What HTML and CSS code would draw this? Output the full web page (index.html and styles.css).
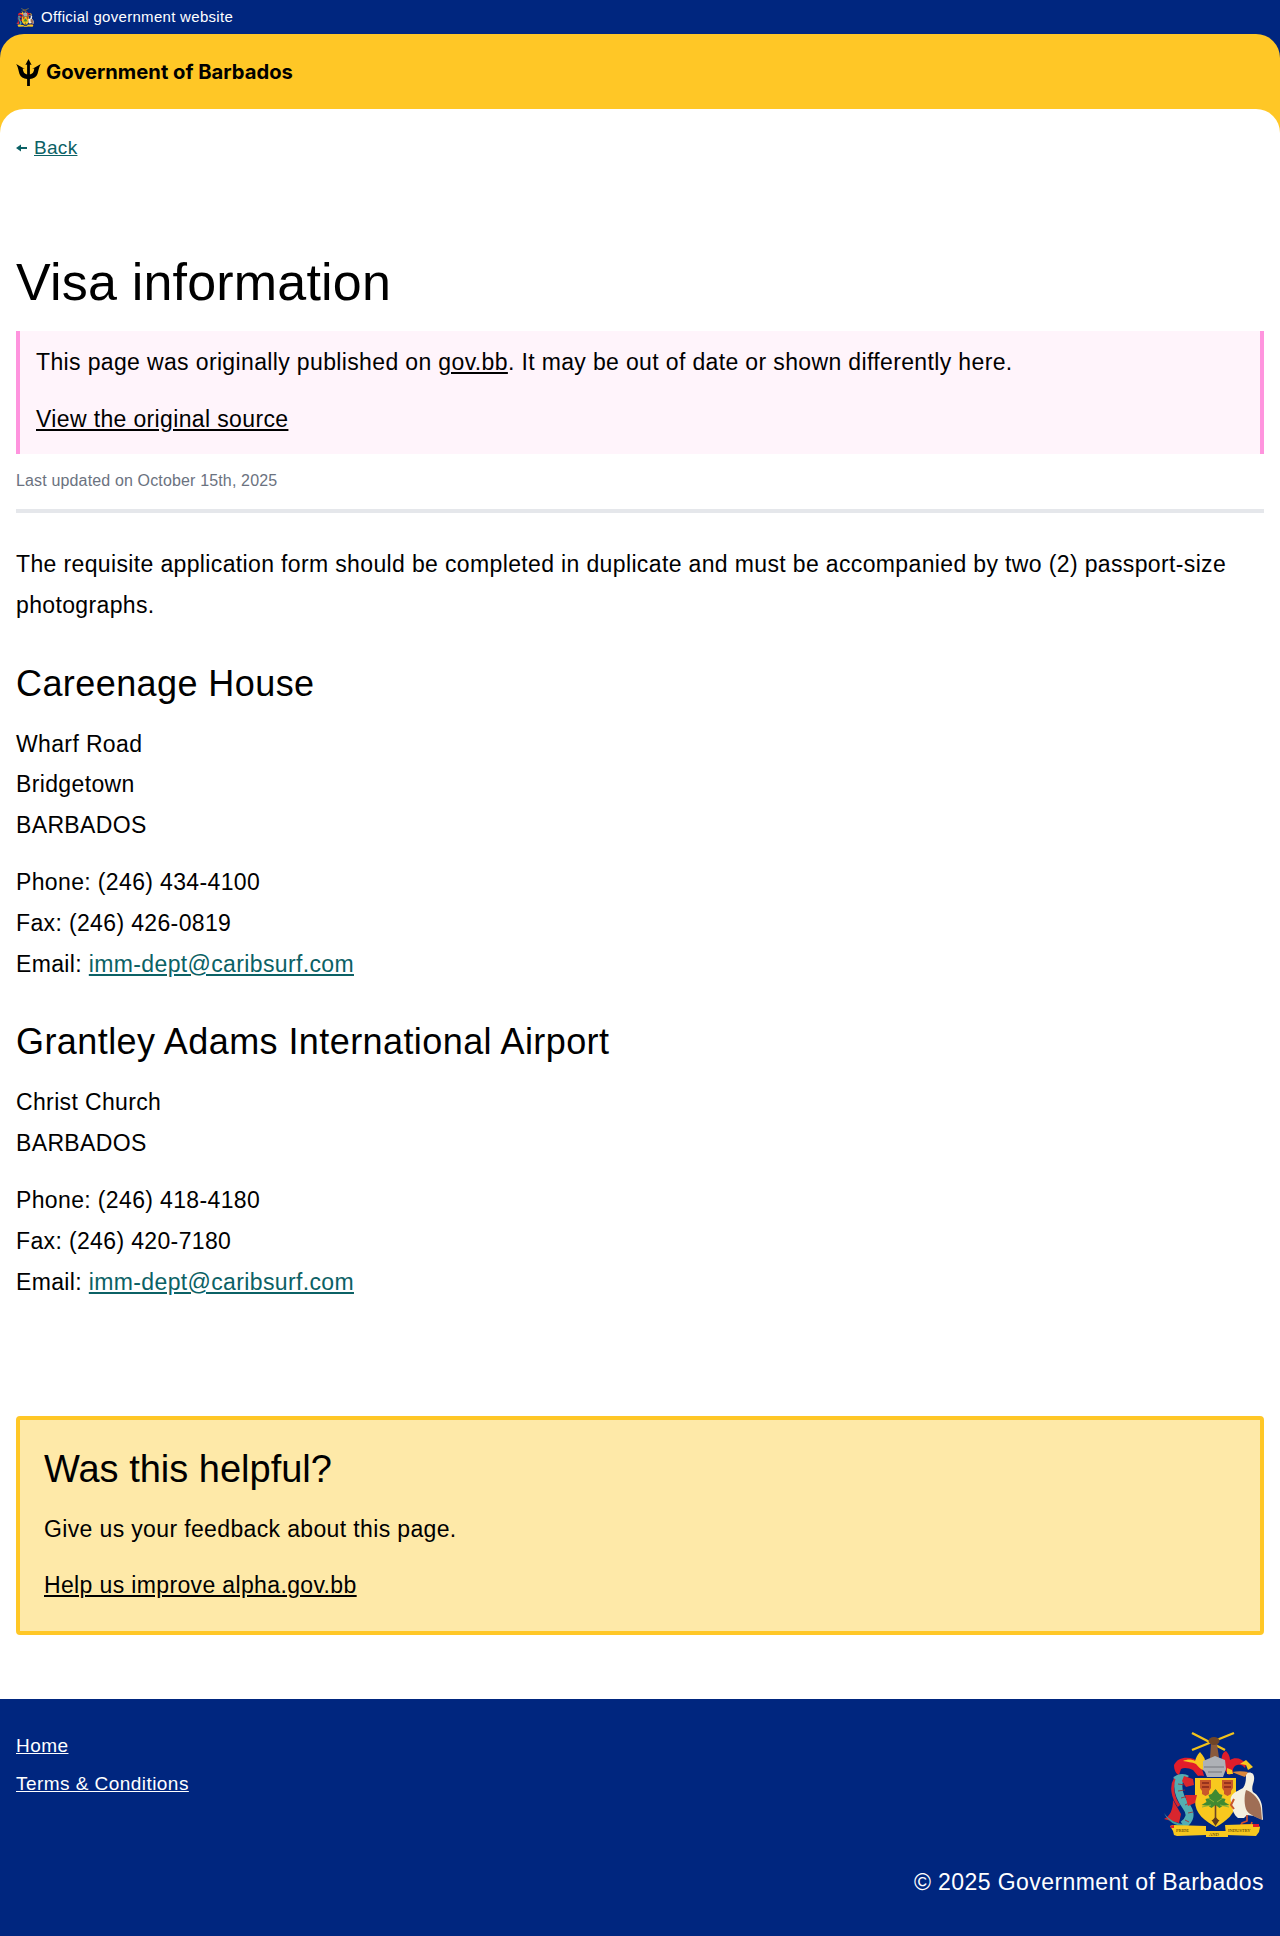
FILE: index.html
```html
<!DOCTYPE html>
<html lang="en">
<head>
<meta charset="utf-8">
<title>Visa information - Government of Barbados</title>
<link rel="stylesheet" href="styles.css">
</head>
<body>
<div class="official">
  <svg class="official-crest" viewBox="33 20 102 108" aria-hidden="true"><use href="#crest-art"/></svg>
  <span>Official government website</span>
</div>
<header class="masthead">
  <a class="brand" href="#">
    <svg class="trident" viewBox="0 0 25 27" aria-hidden="true">
      <path d="M12.500 0L15.600 6L13.900 5.400V15.500C16.500 15 18 13 18.300 9.500L16.200 10L24.800 5C22.500 9 22.500 12 21.500 15C20.500 18 17.500 19.500 13.900 20V27H11.100V20C7.500 19.500 4.500 18 3.500 15C2.500 12 2.500 9 .2 5L8.800 10L6.700 9.500C7 13 8.500 15 11.100 15.500V5.400L9.400 6Z"/>
    </svg>
    <span>Government of Barbados</span>
  </a>
</header>
<main class="sheet">
  <nav class="back">
    <svg class="back-arrow" viewBox="0 0 11 8" aria-hidden="true"><path d="M0 4L5 .5V3H11V5H5V7.500Z"/></svg>
    <a href="#">Back</a>
  </nav>
  <h1>Visa information</h1>
  <aside class="notice">
    <p>This page was originally published on <a href="#">gov.bb</a>. It may be out of date or shown differently here.</p>
    <p><a href="#">View the original source</a></p>
  </aside>
  <p class="updated">Last updated on October 15th, 2025</p>
  <hr class="rule">
  <article class="body">
    <p>The requisite application form should be completed in duplicate and must be accompanied by two (2) passport-size photographs.</p>
    <h2>Careenage House</h2>
    <p>Wharf Road<br>Bridgetown<br>BARBADOS</p>
    <p>Phone: (246) 434-4100<br>Fax: (246) 426-0819<br>Email: <a href="#">imm-dept@caribsurf.com</a></p>
    <h2>Grantley Adams International Airport</h2>
    <p>Christ Church<br>BARBADOS</p>
    <p>Phone: (246) 418-4180<br>Fax: (246) 420-7180<br>Email: <a href="#">imm-dept@caribsurf.com</a></p>
  </article>
  <section class="feedback">
    <h2>Was this helpful?</h2>
    <p>Give us your feedback about this page.</p>
    <p><a href="#">Help us improve alpha.gov.bb</a></p>
  </section>
</main>
<footer class="footer">
  <div class="footer-top">
    <ul class="footer-links">
      <li><a href="#">Home</a></li>
      <li><a href="#">Terms &amp; Conditions</a></li>
    </ul>
    <svg class="footer-crest" viewBox="33 20 102 108" aria-hidden="true">
      <g id="crest-art">
        <path d="M63 23L96 40M105 23L63 40" stroke="#f2c21b" stroke-width="2.400" fill="none"/>
        <path d="M82 34h6l2 14h-9z" fill="#8a5a3c"/>
        <ellipse cx="85" cy="31" rx="5.500" ry="4" fill="#6f4528"/>
        <path d="M45 55c3-7 12-9 20-6 3 2 5 5 8 7l1 9-5 1-5-6c-4-2-9-3-12-1l-2 6c-3-1-5-5-5-10z" fill="#e11d2a"/>
        <path d="M54 51c4-2 9-2 12 0 1-3 2-6 5-9 2 3 5 5 5 9 1 4 0 7-2 9-3-1-5-4-7-6-4-2-9-2-13-3z" fill="#f8c81e"/>
        <path d="M69 58l5 4 1 4-5-1z" fill="#e11d2a"/>
        <path d="M117 54c-4-6-11-7-16-4 0-4-2-7-4-9-3 1-5 5-4 10 0 5 3 10 7 14l4-2c-1-4 1-7 4-8 3-1 6 0 8 3z" fill="#e11d2a"/>
        <path d="M111 54l6-4 7 7-5 3-2-5z" fill="#f8c81e"/>
        <path d="M98 58l5 2 1 4-6 0z" fill="#f8c81e"/>
        <path d="M74 51l12-5 10 4 1 9-3 8H78l-2-5-2-2z" fill="#aeb1b6"/>
        <path d="M75 57h20M79 62h14" stroke="#74777d" stroke-width="1"/>
        <path d="M66 68h41v23c0 13-10 20-20 26-11-6-21-13-21-26z" fill="#f8c81e"/>
        <path d="M71 70h11v8l-2 3v3l-3.500 2-3.500-2v-3l-2-3zM93 70h11v8l-2 3v3l-3.500 2-3.500-2v-3l-2-3z" fill="#c9572a"/>
        <path d="M73 73h7M73 77h7M95 73h7M95 77h7" stroke="#86271a" stroke-width="1.300"/>
        <path d="M86.500 112V80" stroke="#6a4426" stroke-width="1.600"/>
        <path d="M86.500 116l-4-6 1 0 3-3 3 3 1 0z" fill="#5c3a20"/>
        <path d="M86.500 79l4 5 3 1-1 3 4 1-1 3 5 3-7 1-3 2-4-3-4 3-3-2-7-1 5-3-1-3 4-1-1-3 3-1z" fill="#3f8a32"/>
        <path d="M73 97l9-2M100 97l-9-2M79 88l6 4M94 88l-6 4" stroke="#8ab23a" stroke-width="1"/>
        <path d="M35 109c6-3 9-9 9-19l8 14-2 9z" fill="#d9262e"/>
        <path d="M35 103c5 7 13 11 20 11l3 2c-10 1-18-3-23-13z" fill="#3e9da0"/>
        <path d="M47 68c-6 8-3 20 3 28" stroke="#d9262e" stroke-width="3" fill="none"/>
        <path d="M51 68c-4 10 0 20 6 28 6 8 4 14-3 19" stroke="#53aeb2" stroke-width="8" fill="none"/>
        <path d="M49 74l7 1M49 81l7-1M52 88l7-2M56 95l6-3M59 103l5-1M56 110l4 2" stroke="#a3262a" stroke-width=".8"/>
        <path d="M56 85h12l-2 8-7 3z" fill="#d9262e"/>
        <path d="M44 68c4-5 12-5 16-2l-7 6z" fill="#53aeb2"/>
        <path d="M55 66l9 3 1 6-8 2-4-6z" fill="#d9262e"/>
        <path d="M117 64c2-2 5-2 7 0 2 3 1 7 0 10-1 3-1 6 0 8 5 3 8 8 9 14l1 14-9-4-7-1-3 3h-6c-4-3-6-8-6-14-2-3-2-7 1-10 3-3 7-4 10-6 3-4 3-9 3-14z" fill="#f5f0e0"/>
        <path d="M103 62c5-1 11-1 16 0l-3 5c-5-2-9-3-13-5z" fill="#d9873c"/>
        <path d="M117 80c7 2 14 10 15 18l1 12c-6-3-12-5-15-9-3-5-3-15-1-21z" fill="#9f6e55"/>
        <path d="M105 89l-3 6 3 4" stroke="#c9572a" stroke-width="2" fill="none"/>
        <path d="M118 105v6l-5 2-1 2h10l1-3" stroke="#d44f2a" stroke-width="1.600" fill="none"/>
        <path d="M41 116l3-1 33 1v9l-29 1-3-1-1-4z" fill="#f8c81e"/>
        <path d="M77 121h22v6H77z" fill="#f8c81e"/>
        <path d="M96 115l31-1 4 3-1 5-3 4-30-1z" fill="#f8c81e"/>
        <path d="M41 116l4-1v3h-3zM124 114h6v3h-6z" fill="#e11d2a"/>
      </g>
      <text class="motto" x="47" y="122">PRIDE</text>
      <text class="motto" x="80" y="126">AND</text>
      <text class="motto" x="99" y="122">INDUSTRY</text>
    </svg>
  </div>
  <p class="copyright">© 2025 Government of Barbados</p>
</footer>
</body>
</html>
```
FILE: styles.css
```css
* { box-sizing: border-box; }
html, body { margin: 0; padding: 0; }
body {
  background: #00267f;
  color: #000;
  font-family: "Liberation Sans", Arial, sans-serif;
  font-size: 23px;
  letter-spacing: .36px;
  line-height: 1.7;
}
a { color: inherit; }
.motto { font-family: "Liberation Serif", serif; font-size: 4.500px; letter-spacing: 0; fill: #3a2a00; }

.official {
  display: flex;
  align-items: center;
  gap: 7px;
  height: 34px;
  padding: 0 16px;
  color: #fff;
  font-size: 15px;
  letter-spacing: .3px;
  line-height: 1.3;
}
.official-crest { width: 18px; height: 19px; }

.masthead {
  background: #ffc726;
  border-radius: 24px 24px 0 0;
  height: 99px;
  padding: 0 16px 22px;
  display: flex;
  align-items: center;
}
.brand {
  display: flex;
  align-items: center;
  gap: 5px;
  text-decoration: none;
  font-family: "Inter", sans-serif;
  font-weight: 700;
  font-size: 20.200px;
  letter-spacing: 0;
  line-height: 1.4;
}
.trident { width: 25px; height: 27px; fill: #000; }

.sheet {
  background: #fff;
  border-radius: 24px 24px 0 0;
  margin-top: -24px;
  padding: 25px 16px 64px;
  position: relative;
}
.back { font-size: 19px; line-height: 27px; color: #0b6165; display: flex; align-items: center; gap: 7px; letter-spacing: .3px; }
.back-arrow { width: 11px; height: 8px; fill: #0b6165; }

h1 {
  margin: 79px 0 0;
  font-weight: 400;
  font-size: 52px;
  letter-spacing: .2px;
  line-height: 84px;
}

.notice {
  background: #fff4fb;
  border-left: 4px solid #ff94de;
  border-right: 4px solid #ff94de;
  padding: 11px 16px 15px;
  margin-top: 7px;
}
.notice p { margin: 0 0 17px; line-height: 40px; }
.notice p:last-child { margin-bottom: 0; }

.updated { margin: 14px 0 0; font-size: 16px; letter-spacing: .15px; line-height: 26px; color: #6b7280; }
.rule { border: 0; height: 4px; background: #e5e7eb; margin: 15px 0 0; }

.body { margin-top: 31px; }
.body p { margin: 0 0 16px; line-height: 40.800px; }
.body h2 { margin: 31px 0 13px; font-weight: 400; font-size: 36px; letter-spacing: .42px; line-height: 54px; }
.body a { color: #0b6165; }

.feedback {
  margin-top: 114px;
  background: #fee9a8;
  border: 4px solid #ffc726;
  border-radius: 4px;
  padding: 22px 24px 26px;
}
.feedback h2 { margin: 0 0 12.500px; font-weight: 400; font-size: 38px; letter-spacing: 0; line-height: 54px; }
.feedback p { margin: 0 0 16.500px; line-height: 40px; }
.feedback p:last-child { margin-bottom: 0; }

.footer {
  background: #00267f;
  color: #fff;
  padding: 31px 16px 0;
}
.footer-top { display: flex; justify-content: space-between; align-items: flex-start; }
.footer-links { list-style: none; margin: 0; padding: 0; font-size: 19px; letter-spacing: .45px; line-height: 27px; }
.footer-links li { margin-top: 11px; }
.footer-links li:first-child { margin-top: 2px; }
.footer-crest { width: 102px; height: 108px; }
.copyright { margin: 24px 0 0; text-align: right; letter-spacing: .42px; line-height: 40px; }
```
